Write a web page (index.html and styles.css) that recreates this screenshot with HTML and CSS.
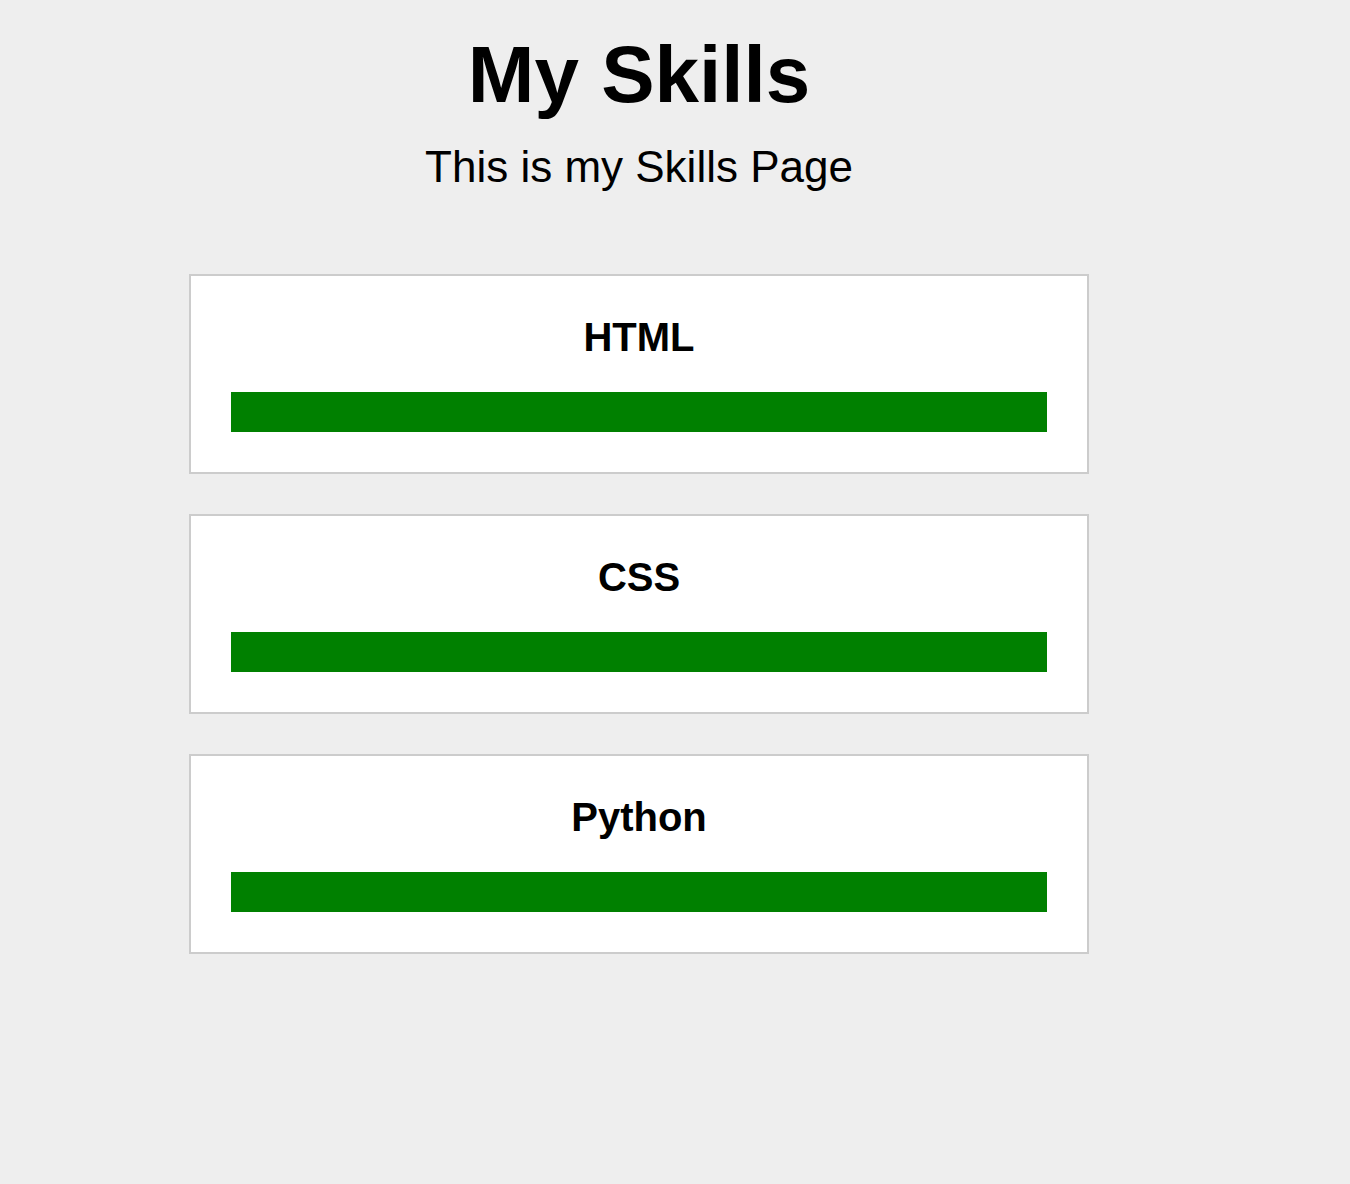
FILE: index.html
```html
<!DOCTYPE html>
<html lang="en">
<head>
<meta charset="utf-8">
<title>My Skills</title>
<link rel="stylesheet" href="styles.css">
</head>
<body>
<main class="page">
  <h1 class="title">My Skills</h1>
  <p class="subtitle">This is my Skills Page</p>
  <section class="skills">
    <div class="skill-card">
      <h2 class="skill-name">HTML</h2>
      <div class="skill-bar"></div>
    </div>
    <div class="skill-card">
      <h2 class="skill-name">CSS</h2>
      <div class="skill-bar"></div>
    </div>
    <div class="skill-card">
      <h2 class="skill-name">Python</h2>
      <div class="skill-bar"></div>
    </div>
  </section>
</main>
</body>
</html>
```
FILE: styles.css
```css
html, body {
  margin: 0;
  padding: 0;
  background: #eeeeee;
}
body {
  font-family: "Liberation Sans", Arial, sans-serif;
  color: #000;
  min-height: 1184px;
}
.page {
  width: 1278px;
  padding-top: 29px;
  text-align: center;
}
.title {
  margin: 0;
  font-size: 80px;
  line-height: 92px;
  font-weight: bold;
}
.subtitle {
  margin: 20px 0 0;
  font-size: 44px;
  line-height: 51px;
}
.skills {
  margin-top: 82px;
  display: flex;
  flex-direction: column;
  align-items: center;
  gap: 40px;
}
.skill-card {
  box-sizing: border-box;
  width: 900px;
  background: #fff;
  border: 2px solid #cccccc;
  padding: 40px;
}
.skill-name {
  margin: 0 0 34px;
  font-size: 40px;
  line-height: 42px;
  font-weight: bold;
}
.skill-bar {
  height: 40px;
  background: #008000;
}
```
